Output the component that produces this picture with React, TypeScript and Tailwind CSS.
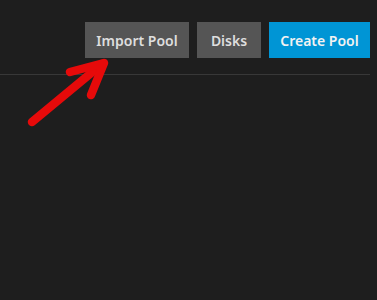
import React from "react";

export default function App() {
  return (
    <div className="w-[377px] h-[300px] bg-[#1e1e1e] relative overflow-hidden" style={{ fontFamily: '"Noto Sans", "Open Sans", sans-serif' }}>
      <div className="pr-[7px] pt-[22px]">
        <div className="flex justify-end gap-2">
          <button className="h-9 w-[104px] bg-[#555555] text-[#dedede] text-[14px] font-semibold">Import Pool</button>
          <button className="h-9 w-[64px] bg-[#555555] text-[#dedede] text-[14px] font-semibold">Disks</button>
          <button className="h-9 w-[101px] bg-[#0095d5] text-[#f2f2f2] text-[14px] font-semibold">Create Pool</button>
        </div>
        <div className="mt-4 h-px bg-[#383838]" />
      </div>
      <svg className="absolute left-0 top-0" width="377" height="300" viewBox="0 0 377 300">
        <g stroke="#e60a0a" strokeWidth="8.5" strokeLinecap="round" strokeLinejoin="round" fill="none">
          <line x1="32" y1="122" x2="102" y2="64" />
          <polyline points="70,72 104,63 91,95" />
        </g>
      </svg>
    </div>
  );
}
